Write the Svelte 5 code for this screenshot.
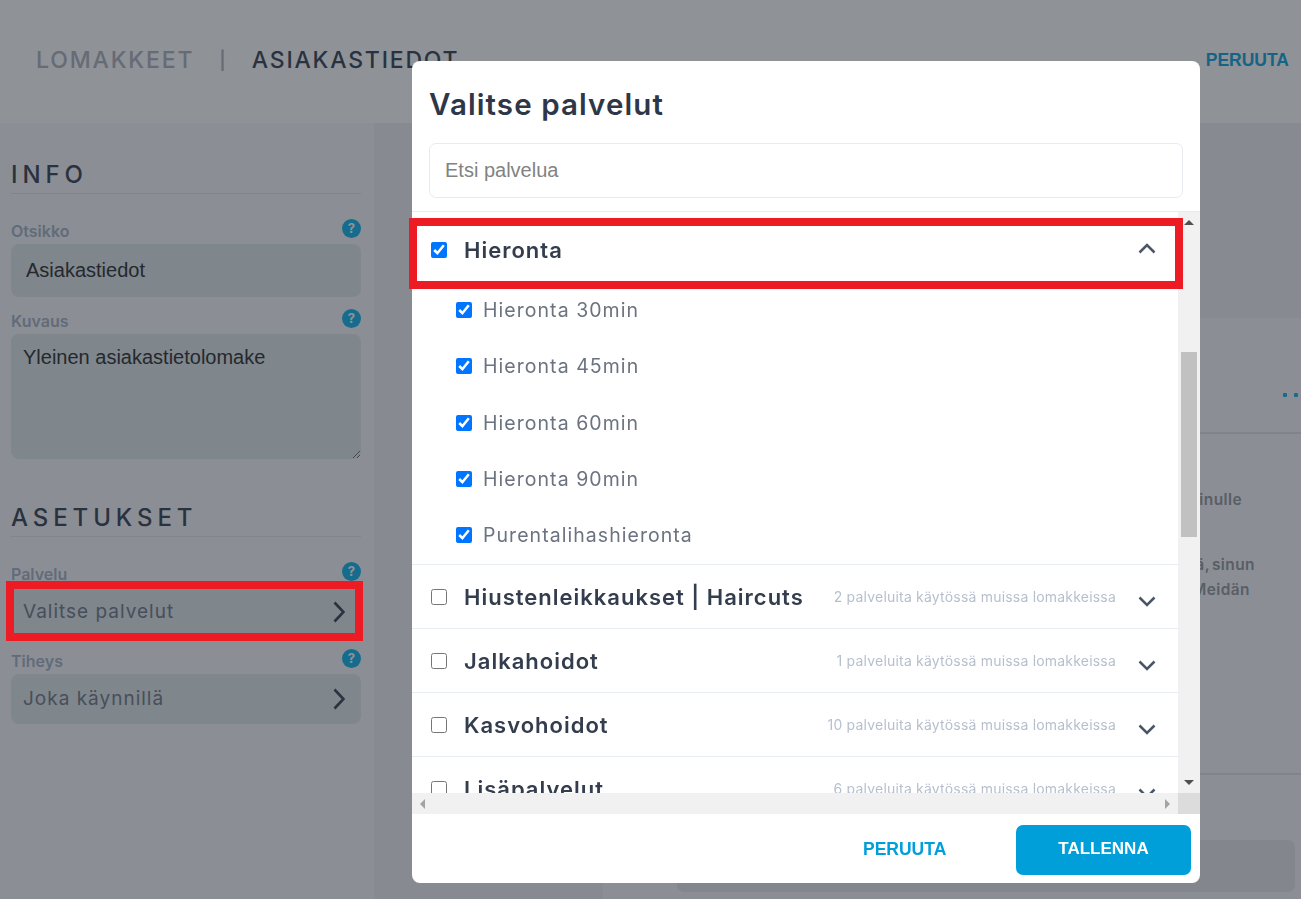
<script>
  const groups = [
    { name: 'Hiustenleikkaukset | Haircuts', used: 2 },
    { name: 'Jalkahoidot', used: 1 },
    { name: 'Kasvohoidot', used: 10 },
    { name: 'Lisäpalvelut', used: 6 }
  ];
  const services = ['Hieronta 30min', 'Hieronta 45min', 'Hieronta 60min', 'Hieronta 90min', 'Purentalihashieronta'];
</script>

{#snippet help()}
  <span class="help">?</span>
{/snippet}

{#snippet chevronRight()}
  <svg class="go" width="12" height="22" viewBox="0 0 12 22"><path d="M1.5 1.5 10.5 11 1.5 20.5" /></svg>
{/snippet}

<div class="page">
  <header class="topbar">
    <div class="crumbs">
      <span class="crumb-root">LOMAKKEET</span>
      <span class="crumb-sep">|</span>
      <span class="crumb-current">ASIAKASTIEDOT</span>
    </div>
    <span class="cancel">PERUUTA</span>
  </header>

  <div class="body">
    <aside class="sidebar">
      <h2 class="section">INFO</h2>
      <div class="field first">
        <div class="label-row"><span>Otsikko</span>{@render help()}</div>
        <input class="text-input" value="Asiakastiedot" />
      </div>
      <div class="field">
        <div class="label-row"><span>Kuvaus</span>{@render help()}</div>
        <textarea class="text-area" value="Yleinen asiakastietolomake"></textarea>
      </div>

      <h2 class="section second">ASETUKSET</h2>
      <div class="field first marked">
        <div class="label-row"><span>Palvelu</span>{@render help()}</div>
        <div class="picker-btn">Valitse palvelut {@render chevronRight()}</div>
        <div class="mark mark-side"></div>
      </div>
      <div class="field">
        <div class="label-row"><span>Tiheys</span>{@render help()}</div>
        <div class="picker-btn">Joka käynnillä {@render chevronRight()}</div>
      </div>
    </aside>

    <main class="content">
      <section class="card">
        <div class="card-head"><i class="dot"></i><i class="dot"></i></div>
        <div class="card-text">
          <p class="l1">sinulle</p>
          <p class="l2">ä, sinun</p>
          <p class="l3">Meidän</p>
        </div>
        <div class="card-foot"><div class="card-input"></div></div>
      </section>
    </main>
  </div>
</div>

<div class="overlay">
  <div class="modal">
    <div class="modal-head">
      <h1>Valitse palvelut</h1>
      <input class="search" placeholder="Etsi palvelua" />
    </div>

    <div class="list-wrap">
      <div class="list">
        <div class="group open">
          <input type="checkbox" checked />
          <span class="group-name">Hieronta</span>
          <svg class="chev up" width="18" height="11" viewBox="0 0 18 11"><path d="M1.5 9.5 9 2l7.5 7.5" /></svg>
        </div>
        {#each services as s}
          <label class="service"><input type="checkbox" checked /> <span>{s}</span></label>
        {/each}
        {#each groups as g}
          <div class="group">
            <input type="checkbox" />
            <span class="group-name">{g.name}</span>
            <span class="note">{g.used} palveluita käytössä muissa lomakkeissa</span>
            <svg class="chev down" width="18" height="11" viewBox="0 0 18 11"><path d="M1.5 1.5 9 9l7.5-7.5" /></svg>
          </div>
        {/each}
      </div>

      <div class="vbar">
        <div class="arrow-box"><i class="tri tri-up"></i></div>
        <div class="vtrack"><div class="vthumb"></div></div>
        <div class="arrow-box"><i class="tri tri-down"></i></div>
      </div>
      <div class="hbar">
        <i class="tri tri-left"></i>
        <i class="tri tri-right"></i>
      </div>
      <div class="corner"></div>
      <div class="mark mark-row"></div>
    </div>

    <div class="modal-foot">
      <button class="btn-text">PERUUTA</button>
      <button class="btn-save">TALLENNA</button>
    </div>
  </div>
</div>

<style>
  :global(body) {
    margin: 0;
    overflow: hidden;
  }

  .page {
    height: 899px;
    background: #f7f9fb;
    font-family: Inter, "Liberation Sans", sans-serif;
    display: flex;
    flex-direction: column;
    overflow: hidden;
  }

  .topbar {
    height: 123px;
    flex: none;
    box-sizing: border-box;
    background: #ffffff;
    padding: 0 12px 3px 36px;
    display: flex;
    align-items: center;
    justify-content: space-between;
  }

  .crumbs {
    display: flex;
    align-items: center;
    font-size: 23px;
    font-weight: 500;
    letter-spacing: 1.85px;
  }

  .crumb-root { color: #a9aeb8; }
  .crumb-sep { color: #a9aeb8; margin: 0 26px 0 25px; font-size: 18px; font-weight: 600; letter-spacing: 0; }
  .crumb-current { color: #2d3748; font-weight: 500; letter-spacing: 1.8px; }

  .cancel {
    font: bold 17.5px "Liberation Sans", sans-serif;
    color: #009fd9;
  }

  .body {
    flex: 1;
    display: flex;
    min-height: 0;
  }

  .sidebar {
    width: 374px;
    flex: none;
    box-sizing: border-box;
    padding: 36px 13px 0 11px;
  }

  .section {
    margin: 0;
    height: 35px;
    box-sizing: border-box;
    border-bottom: 1px solid #dfe3e8;
    font-size: 24px;
    line-height: 32px;
    font-weight: 500;
    letter-spacing: 4.9px;
    color: #2d3748;
  }

  .section.second { margin-top: 43px; }

  .field { margin-top: 12px; position: relative; }
  .field.first { margin-top: 25px; }

  .label-row {
    height: 19px;
    margin-bottom: 6px;
    display: flex;
    justify-content: space-between;
    align-items: flex-end;
    font-size: 16px;
    line-height: 13px;
    font-weight: 600;
    color: #a0aec0;
  }

  .help {
    width: 19px;
    height: 19px;
    border-radius: 50%;
    background: #00b0ea;
    color: #ffffff;
    font-size: 13px;
    line-height: 19px;
    font-weight: 700;
    text-align: center;
    align-self: flex-start;
  }

  .text-input, .text-area {
    display: block;
    width: 100%;
    box-sizing: border-box;
    border: 0;
    border-radius: 8px;
    background: #dde5e8;
    font: 20px/24px "Liberation Sans", sans-serif;
    color: #222222;
    outline: none;
  }

  .text-input { height: 53px; padding: 0 15px; }
  .text-area { height: 125px; padding: 11px 12px; }

  .picker-btn {
    height: 50px;
    box-sizing: border-box;
    padding: 0 16px 1px 12px;
    border-radius: 8px;
    background: #dde5e8;
    display: flex;
    align-items: center;
    justify-content: space-between;
    font-size: 19px;
    letter-spacing: 1px;
    color: #6b7280;
  }

  .go path {
    fill: none;
    stroke: #2d3748;
    stroke-width: 2.6;
  }

  .mark {
    position: absolute;
    border: 8px solid #ed1c24;
    pointer-events: none;
    box-sizing: border-box;
    z-index: 2;
  }

  .mark-side {
    left: -5px;
    right: -2px;
    top: 19px;
    height: 60px;
  }

  .content {
    flex: 1;
    min-width: 0;
    background: #eff1f3;
    padding: 195px 0 0 229px;
  }

  .card {
    height: 581px;
    box-sizing: border-box;
    background: #f7f9fb;
    display: flex;
    flex-direction: column;
  }

  .card-head {
    height: 116px;
    box-sizing: border-box;
    border-bottom: 2px solid #dfe1e4;
    padding: 75px 3px 0 0;
    flex: none;
    display: flex;
    justify-content: flex-end;
    gap: 7px;
  }

  .dot {
    width: 4px;
    height: 4px;
    border-radius: 1px;
    background: #00b0ea;
  }

  .card-text {
    height: 339px;
    box-sizing: border-box;
    flex: none;
    padding: 0 46px 0 0;
    text-align: right;
    font-size: 15.5px;
    font-weight: 600;
    letter-spacing: 0.4px;
    line-height: 25px;
    color: #8f9299;
  }

  .card-text p { margin: 0; }
  .l1 { padding-top: 53px; padding-right: 13px; }
  .l2 { padding-top: 40px; word-spacing: -2px; }
  .l3 { padding-right: 5px; }

  .card-foot {
    flex: 1;
    border-top: 2px solid #dfe1e4;
    padding: 65px 6px 0 74px;
  }

  .card-input {
    height: 52px;
    border-radius: 7px;
    background: #e6e7e8;
  }

  .overlay {
    position: fixed;
    inset: 0;
    background: rgba(40, 46, 56, 0.52);
    box-sizing: border-box;
    padding: 61px 0 0 412px;
  }

  .modal {
    width: 788px;
    height: 822px;
    background: #ffffff;
    border-radius: 8px;
    display: flex;
    flex-direction: column;
    font-family: Inter, "Liberation Sans", sans-serif;
  }

  .modal-head {
    height: 150px;
    flex: none;
    box-sizing: border-box;
    padding: 24px 17px 0;
  }

  .modal-head h1 {
    margin: 0;
    font-size: 29.5px;
    line-height: 38px;
    font-weight: 600;
    letter-spacing: 1.1px;
    color: #2d3748;
  }

  .search {
    display: block;
    width: 100%;
    height: 55px;
    margin-top: 20px;
    box-sizing: border-box;
    border: 1.5px solid #e7ebf0;
    border-radius: 7px;
    padding: 0 15px;
    font: 20px "Liberation Sans", sans-serif;
    outline: none;
  }

  .search::placeholder { color: #828282; opacity: 1; }

  .list-wrap {
    position: relative;
    height: 603px;
    flex: none;
    box-sizing: border-box;
    border-top: 1px solid #e8ecf1;
    display: grid;
    grid-template-columns: 766px 22px;
    grid-template-rows: 581px 21px;
  }

  .list {
    overflow: hidden;
    padding-top: 6px;
    box-sizing: border-box;
  }

  .group {
    height: 64px;
    box-sizing: border-box;
    border-bottom: 1px solid #e8ecf3;
    padding: 0 22px 0 19px;
    display: flex;
    align-items: center;
  }

  .group.open { border-bottom: 0; }

  input[type="checkbox"] {
    width: 16px;
    height: 16px;
    margin: 0;
    flex: none;
  }

  .group-name {
    margin-left: 17px;
    font-size: 22px;
    font-weight: 600;
    letter-spacing: 1px;
    color: #333d4d;
  }

  .note {
    margin-left: auto;
    font-size: 14px;
    letter-spacing: 0.2px;
    color: #b7bfce;
  }

  .chev { flex: none; }
  .chev path { fill: none; stroke: #4a5568; stroke-width: 2.5; }
  .chev.up { margin: -4px 0 0 auto; }
  .chev.down { margin: 9px 0 0 22px; }

  .mark-row {
    left: -3px;
    right: 17px;
    top: 6px;
    height: 71px;
  }

  .service {
    height: 56.25px;
    padding-left: 44px;
    display: flex;
    align-items: center;
    gap: 11px;
    font-size: 19.5px;
    letter-spacing: 1.05px;
    color: #6b7280;
  }

  .service:last-of-type {
    height: 57.25px;
    padding-bottom: 1px;
    box-sizing: content-box;
    border-bottom: 1px solid #e8ecf3;
    height: 56.25px;
  }

  .vbar {
    background: #f1f1f1;
    display: flex;
    flex-direction: column;
  }

  .arrow-box {
    height: 21px;
    flex: none;
    display: flex;
    align-items: center;
    justify-content: center;
  }

  .vtrack { flex: 1; }

  .vthumb {
    height: 185px;
    margin: 119px 3px 0;
    background: #c1c1c1;
  }

  .tri { display: block; width: 0; height: 0; border: solid transparent; }
  .tri-up { border-width: 0 5px 5px; border-bottom-color: #505050; }
  .tri-down { border-width: 5px 5px 0; border-top-color: #505050; }
  .tri-left { border-width: 5px 5px 5px 0; border-right-color: #a3a3a3; }
  .tri-right { border-width: 5px 0 5px 5px; border-left-color: #a3a3a3; }

  .hbar {
    background: #f1f1f1;
    display: flex;
    align-items: center;
    justify-content: space-between;
    padding: 0 8px;
  }

  .corner { background: #dcdcdc; }

  .modal-foot {
    flex: 1;
    box-sizing: border-box;
    padding: 11px 9px 0 0;
    display: flex;
    justify-content: flex-end;
    align-items: flex-start;
  }

  .modal-foot button {
    height: 50px;
    border: 0;
    border-radius: 7px;
    font: bold 17.5px "Liberation Sans", sans-serif;
    padding: 0 0 2px;
  }

  .btn-text {
    width: 82px;
    margin-right: 71px;
    background: none;
    color: #009fd9;
  }

  .modal-foot .btn-save {
    width: 175px;
    background: #009fd9;
    color: #ffffff;
    font-size: 17px;
  }
</style>
